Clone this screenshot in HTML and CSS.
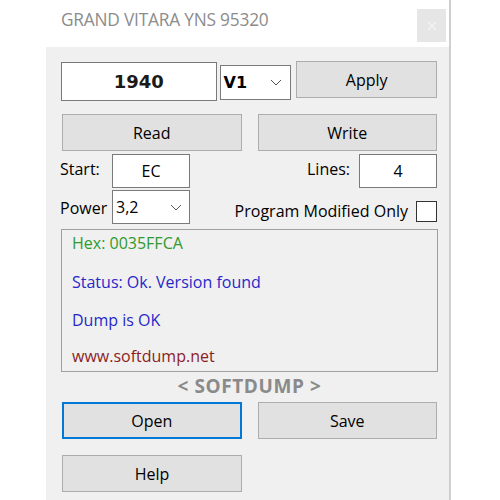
FILE: index.html
```html
<!DOCTYPE html>
<html>
<head>
<meta charset="utf-8">
<link rel="stylesheet" href="styles.css">
</head>
<body>
<div class="window">
  <div class="titlebar">
    <div class="title">GRAND VITARA YNS 95320</div>
    <div class="close"><svg width="10" height="10" viewBox="0 0 10 10"><path d="M1 1L9 9M9 1L1 9" stroke="#f4f4f4" stroke-width="1.2"/></svg></div>
  </div>
  <div class="client">
    <div class="row row1">
      <div class="field big">1940</div>
      <div class="combo ver"><span>V1</span><svg class="chev" width="12" height="7" viewBox="0 0 12 7"><path d="M1 1L6 6L11 1" fill="none" stroke="#555" stroke-width="1"/></svg></div>
      <div class="btn apply">Apply</div>
    </div>
    <div class="row row2">
      <div class="btn half">Read</div>
      <div class="btn half">Write</div>
    </div>
    <div class="row row3">
      <span class="lbl start">Start:</span>
      <div class="field small">EC</div>
      <span class="lbl lines">Lines:</span>
      <div class="field small">4</div>
    </div>
    <div class="row row4">
      <span class="lbl power">Power</span>
      <div class="combo pw"><span>3,2</span><svg class="chev" width="12" height="7" viewBox="0 0 12 7"><path d="M1 1L6 6L11 1" fill="none" stroke="#555" stroke-width="1"/></svg></div>
      <span class="lbl prog">Program Modified Only</span>
      <div class="check"></div>
    </div>
    <div class="log">
      <div class="ln green">Hex: 0035FFCA</div>
      <div class="ln blue">Status: Ok. Version found</div>
      <div class="ln blue">Dump is OK</div>
      <div class="ln red">www.softdump.net</div>
    </div>
    <div class="brand">&lt; SOFTDUMP &gt;</div>
    <div class="row row5">
      <div class="btn half focus">Open</div>
      <div class="btn half">Save</div>
    </div>
    <div class="row row6">
      <div class="btn half">Help</div>
    </div>
  </div>
</div>
</body>
</html>
```
FILE: styles.css
```css
html, body {
  margin: 0;
  padding: 0;
  background: #ffffff;
  width: 500px;
  height: 500px;
  overflow: hidden;
}
body {
  font-family: "Open Sans", "Noto Sans", sans-serif;
}
.window {
  margin-left: 46px;
  width: 403px;
  height: 500px;
  border-right: 2px solid #cfcfcf;
  display: flex;
  flex-direction: column;
}
.titlebar {
  height: 47px;
  background: #ffffff;
  display: flex;
  align-items: flex-start;
  justify-content: space-between;
}
.title {
  margin-top: 8px;
  margin-left: 15px;
  font-size: 17.3px;
  color: #8c8c8c;
  letter-spacing: -0.2px;
}
.close {
  margin-top: 9px;
  margin-right: 3px;
  width: 29px;
  height: 33px;
  background: #e6e6e6;
  display: flex;
  align-items: center;
  justify-content: center;
}
.client {
  flex: 1;
  background: #f0f0f0;
  padding: 15px 12px 0 15px;
  font-size: 16px;
  color: #000;
}
.row {
  display: flex;
  align-items: center;
}
.field {
  box-sizing: border-box;
  background: #fff;
  border: 1px solid #7a7a7a;
  display: flex;
  align-items: center;
  justify-content: center;
}
.big {
  width: 156px;
  height: 39px;
  font-family: "DejaVu Sans", Verdana, sans-serif;
  font-weight: bold;
  font-size: 18px;
  color: #1a1a1a;
}
.combo {
  box-sizing: border-box;
  background: #fff;
  border: 1px solid #7a7a7a;
  display: flex;
  align-items: center;
  justify-content: space-between;
}
.ver {
  width: 72px;
  height: 35px;
  margin-left: 3px;
  padding: 0 8px 0 3px;
  font-family: "DejaVu Sans", Verdana, sans-serif;
  font-weight: bold;
  font-size: 16px;
}
.btn {
  box-sizing: border-box;
  background: #e1e1e1;
  border: 1px solid #adadad;
  display: flex;
  align-items: center;
  justify-content: center;
  color: #000;
}
.apply {
  width: 141px;
  height: 37px;
  margin-left: 5px;
  align-self: flex-start;
}
.row1 {
  align-items: flex-start;
  height: 39px;
}
.row1 .ver { margin-top: 3px; }
.row1 .apply { margin-top: -1px; }
.row2 {
  margin-top: 13px;
  margin-left: 1px;
  gap: 16px;
}
.half {
  width: 180px;
  height: 37px;
}
.row3 {
  margin-top: 3px;
  height: 34px;
}
.small {
  box-sizing: border-box;
  width: 78px;
  height: 34px;
}
.lbl {
  font-size: 16px;
}
.start {
  width: 52px;
  margin-left: -1px;
  margin-top: -4px;
}
.lines {
  margin-left: auto;
  margin-right: 9px;
  margin-top: -4px;
}
.row4 {
  margin-top: 2px;
  height: 34px;
}
.power {
  width: 52px;
  margin-left: -1px;
  margin-top: 2px;
}
.pw {
  width: 78px;
  height: 34px;
  padding: 0 7px 0 3px;
  font-size: 16px;
}
.prog {
  margin-left: auto;
  margin-right: 8px;
  margin-top: 8px;
}
.check {
  box-sizing: border-box;
  width: 21px;
  height: 21px;
  background: #fff;
  border: 1px solid #333;
  margin-top: 8px;
}
.log {
  box-sizing: border-box;
  margin-top: 5px;
  width: 377px;
  height: 143px;
  border: 1px solid #a0a0a0;
  padding: 0 0 0 10px;
  display: flex;
  flex-direction: column;
}
.ln {
  font-size: 16px;
  line-height: 20px;
}
.green { color: #2f9a2f; margin-top: 3px; }
.blue { color: #2828c8; margin-top: 19px; }
.red { color: #8b1e1e; margin-top: 16px; }
.log .blue + .blue { margin-top: 18px; }
.brand {
  margin-top: 3px;
  width: 377px;
  text-align: center;
  font-family: "Open Sans", sans-serif;
  font-weight: bold;
  font-size: 19px;
  letter-spacing: 0.6px;
  color: #8a8a8a;
  line-height: 22px;
}
.row5 {
  margin-top: 5px;
  margin-left: 1px;
  gap: 16px;
}
.focus {
  border: 2px solid #0078d7;
  background: #e1e1e1;
}
.row6 {
  margin-top: 16px;
  margin-left: 1px;
}
```
